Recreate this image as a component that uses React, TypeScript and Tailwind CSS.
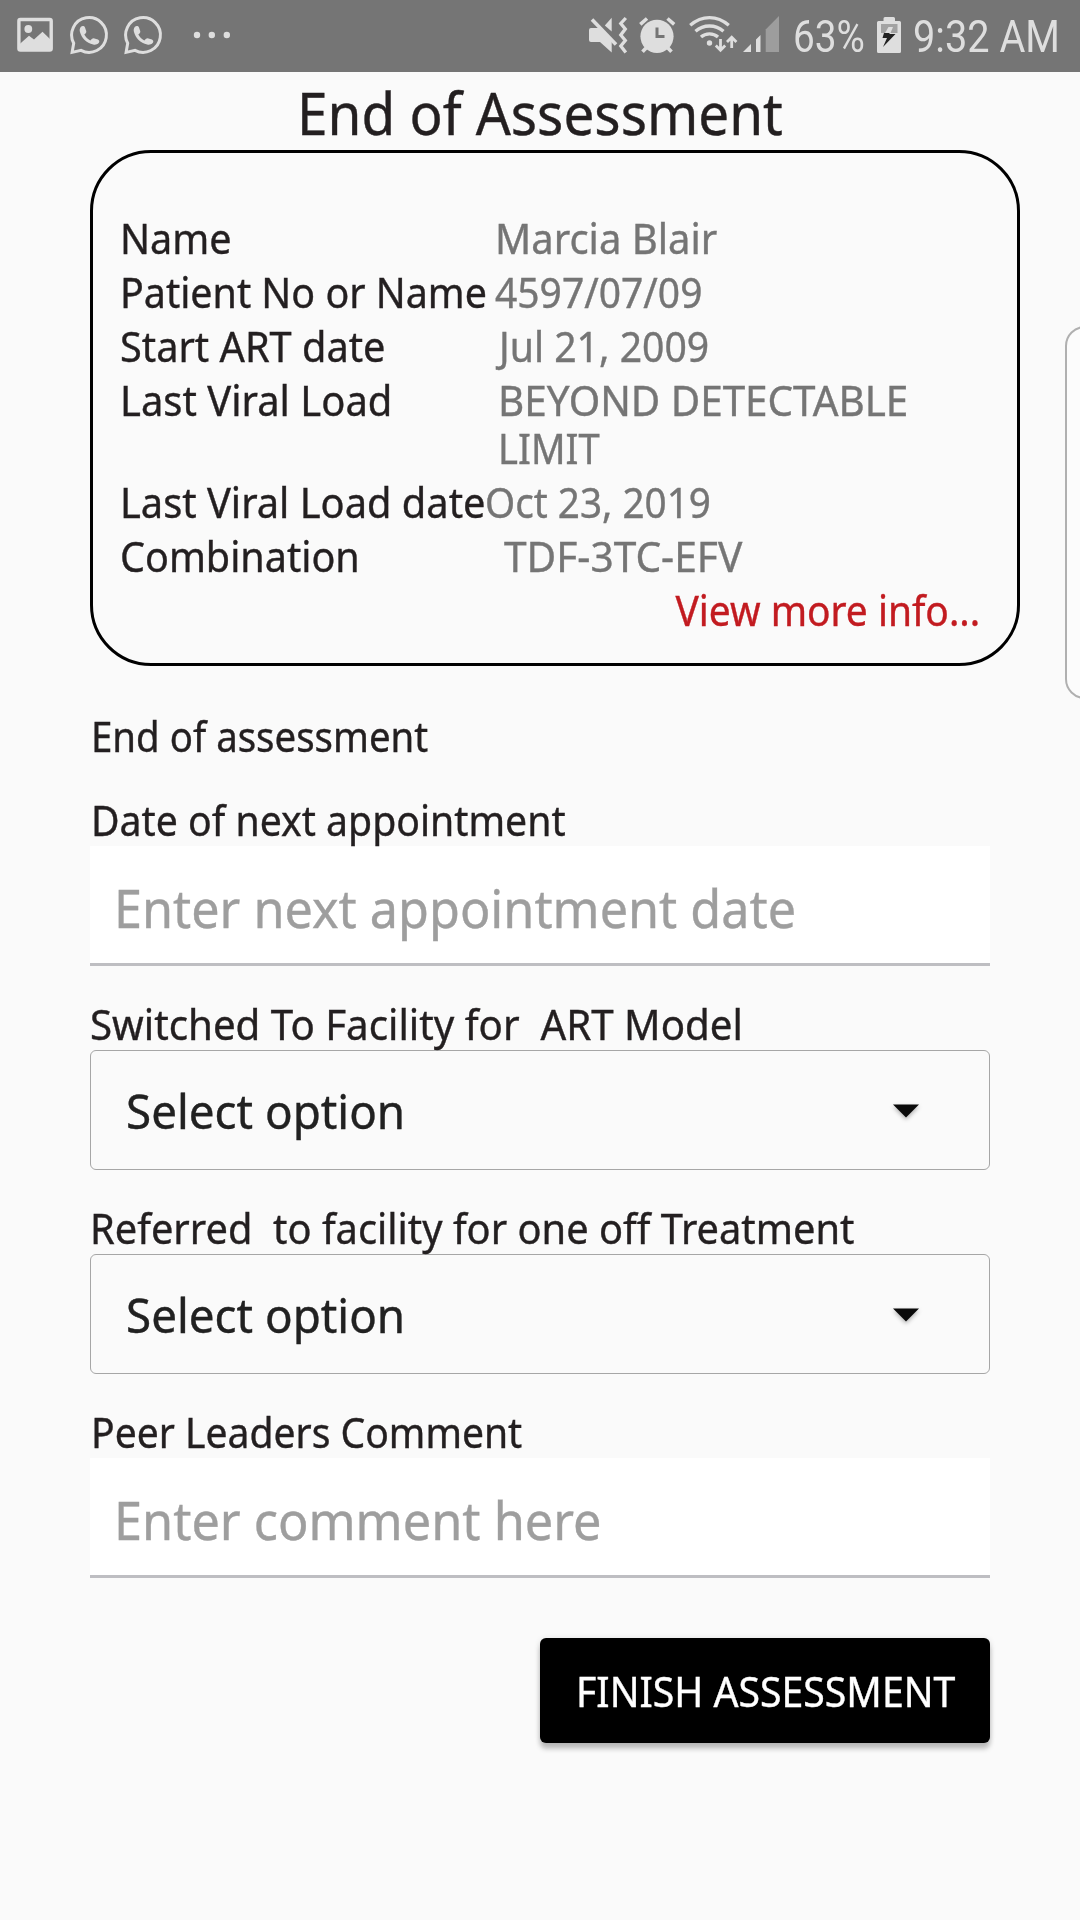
import React from "react";

const fit = "inline-block origin-left whitespace-pre";

const patient = [
  { label: "Name", ls: "scale-x-[0.966]", value: "Marcia Blair", vs: "scale-x-[0.975]" },
  { label: "Patient No or Name", ls: "scale-x-[0.961]", value: "4597/07/09", vs: "scale-x-[0.951]" },
  { label: "Start ART date", ls: "scale-x-[0.969]", value: "Jul 21, 2009", vs: "ml-[4px] scale-x-[0.955]" },
  { label: "Last Viral Load", ls: "scale-x-[0.974]", value: "BEYOND DETECTABLE", more: "LIMIT", vs: "ml-[3px] scale-x-[0.984]" },
  { label: "Last Viral Load date", ls: "scale-x-[0.971]", value: "Oct 23, 2019", vs: "ml-[-10px] scale-x-[0.943]" },
  { label: "Combination", ls: "scale-x-[0.964]", value: "TDF-3TC-EFV", vs: "ml-[9px] scale-x-[0.991]" },
];

function WhatsApp() {
  return (
    <svg width="54" height="72" viewBox="61.6 0 54 72">
      <path
        d="M73.3 43.2A17.4 17.4 0 1 1 80.6 50.4L71.7 52.4Z"
        fill="none"
        stroke="#dedede"
        strokeWidth="3"
        strokeLinejoin="miter"
      />
      <path
        d="M80.6 26.8c1.2-1.2 3.3-.9 4 .7l1.2 3.5c.3 1-.1 2-.9 2.7l-1 .9c1.4 2.600 3.400 4.600 6 6l1.500-1.500c.7-.7 1.600-1 2.600-.7l3.500 1.200c1.500.6 1.900 2.400.8 3.500-1.300 1.400-3.400 2-5.500 1.500-6.800-1.700-11.600-6.400-13.300-12.800-.5-1.900-.1-3.700 1.100-5z"
        fill="#dedede"
      />
    </svg>
  );
}

function StatusBar() {
  return (
    <header className="flex h-[72px] justify-between overflow-hidden bg-[#757575] text-[45px] leading-[73px] font-['Roboto',sans-serif] text-[#dedede]">
      <div className="flex">
        <svg width="62" height="72" viewBox="0 0 62 72">
          <rect x="18.900" y="19.500" width="32.300" height="30.500" rx="1.500" fill="none" stroke="#dedede" strokeWidth="3.400" />
          <circle cx="28.300" cy="29" r="3.900" fill="#dedede" />
          <path d="M20 43.800 29 35.800 34 39.500 42.500 31.800 50 39V50H20Z" fill="#dedede" />
        </svg>
        <WhatsApp />
        <WhatsApp />
        <svg width="70" height="72" viewBox="170 0 70 72" fill="#dedede">
          <circle cx="197" cy="35" r="3.200" />
          <circle cx="211.800" cy="35" r="3.200" />
          <circle cx="226.800" cy="35" r="3.200" />
        </svg>
      </div>
      <div className="flex">
        <svg width="50" height="72" viewBox="12 0 50 72" fill="#dedede">
          <path d="M21 28H29L41.700 39V52.500L30 42H21Q19 42 19 40V30Q19 28 21 28Z" />
          <path d="M34.800 25.500 41.700 17.800V31.500Z" />
          <path d="M22 19.500 46 44.500" stroke="#dedede" strokeWidth="3.600" />
          <path d="M55.800 18 50.800 23.500 55.300 29 50.800 35 55.300 40.500 50.800 46 55.800 52.500" fill="none" stroke="#dedede" strokeWidth="3.300" />
        </svg>
        <svg width="50" height="72" viewBox="62 0 50 72">
          <circle cx="87" cy="36.300" r="16.600" fill="#dedede" />
          <path d="M70.300 24.300 77 18.500M97.500 18.500 104.200 24.300M72.500 51.800 78 46M96 46 101.500 51.800" stroke="#dedede" strokeWidth="3.600" />
          <path d="M87 27.500V36.500H94.500" fill="none" stroke="#757575" strokeWidth="3" />
        </svg>
        <svg width="58" height="72" viewBox="112 0 58 72" fill="none" stroke="#dedede" strokeWidth="3.300">
          <path d="M120.200 25.300Q129 17.600 139.500 17.600T158.800 25.300" />
          <path d="M125.500 31.300Q131.500 26 139.500 26T153.500 31.300" />
          <path d="M131 37Q134.500 33.800 139.500 33.800T148 37" />
          <circle cx="139.500" cy="43" r="2.700" fill="#dedede" stroke="none" />
          <path d="M150.500 39V50M145.800 45.500 150.500 50.200 155.200 45.500M161.700 48V38M157 42 161.700 37.300 166.400 42" strokeWidth="2.800" />
        </svg>
        <svg width="54" height="72" viewBox="170 0 54 72" fill="#dedede">
          <path d="M173 52 181 44V52ZM186 39.500 190.500 35V52H186Z" />
          <path d="M195.700 29.500 209 16V52H195.700Z" fill="#9d9d9d" />
        </svg>
        <div className="w-[77px]">
          <span className={`${fit} ml-[-1px] scale-x-[0.86]`}>63%</span>
        </div>
        <svg width="42" height="72" viewBox="871 0 42 72">
          <path d="M883.500 21V18.500Q883.500 17 885 17H893.500Q895 17 895 18.500V21H899.500Q901 21 901 22.500V51.500Q901 53 899.500 53H878.500Q877 53 877 51.500V22.500Q877 21 878.500 21Z" fill="#dedede" />
          <path d="M881 24H897.500V33H881Z" fill="#a2a2a2" />
          <path d="M888.500 27H893L890.500 33H885Z" fill="#dedede" />
          <path d="M884 33H889.500V34H895.500L883 47 887 38H882.500Z" fill="#222" />
        </svg>
        <div className="w-[167px]">
          <span className={`${fit} scale-x-[0.882]`}>9:32 AM</span>
        </div>
      </div>
    </header>
  );
}

function TextField({ label, ls, hint, hs }: { label: string; ls: string; hint: string; hs: string }) {
  return (
    <div className="mb-[34px]">
      <div className="h-[50px] pl-px">
        <label className={`${fit} ${ls}`}>{label}</label>
      </div>
      <div className="h-[120px] border-b-[3px] border-[#bebec2] bg-white pl-[24px] text-[52.8px] leading-[123px] text-[#9e9e9e]">
        <span className={`${fit} ${hs}`}>{hint}</span>
      </div>
    </div>
  );
}

function SelectField({ label, ls }: { label: string; ls: string }) {
  return (
    <div className="mb-[34px]">
      <div className="h-[50px]">
        <label className={`${fit} ${ls}`}>{label}</label>
      </div>
      <div className="flex h-[120px] items-center justify-between rounded-[6px] border border-[#a6a6a6] pt-[2px] pr-[70px] pl-[35px] text-[47px] leading-[118px] text-[#212121]">
        <span className={`${fit} scale-x-[0.974]`}>Select option</span>
        <svg className="drop-shadow-[0_2px_2px_rgba(0,0,0,0.3)]" width="26" height="14" viewBox="0 0 26 14">
          <path d="M0 .5H26L13 13.500Z" fill="#0a0a0a" />
        </svg>
      </div>
    </div>
  );
}

export default function App() {
  return (
    <div className="relative h-[1920px] w-[1080px] overflow-hidden bg-[#fafafa] font-['Noto_Sans',sans-serif] text-[41px] leading-[48px] text-[#231f20]">
      <StatusBar />
      <main className="pr-[90px] pl-[90px] [-webkit-text-stroke:0.4px]">
        <h1 className="h-[78px] pl-[207px] text-[58.5px] leading-[80px]">
          <span className={`${fit} scale-x-[0.938]`}>End of Assessment</span>
        </h1>
        <section className="mr-[-30px] h-[516px] rounded-[61px] border-[3px] border-black pt-[61px] pr-[37px] pl-[27px]">
          {patient.map((row) => (
            <div key={row.label} className="flex pb-[6px]">
              <div className="w-[375px] shrink-0">
                <span className={`${fit} ${row.ls}`}>{row.label}</span>
              </div>
              <div className="flex flex-col items-start text-[#757575]">
                <span className={`${fit} ${row.vs}`}>{row.value}</span>
                {row.more && <span className={`${fit} ml-[3px] scale-x-[0.93]`}>{row.more}</span>}
              </div>
            </div>
          ))}
          <div className="flex justify-end">
            <a className="inline-block origin-right scale-x-[0.949] whitespace-pre text-[#c21b20]">View more info...</a>
          </div>
        </section>
        <h2 className="mt-[46px] mb-[36px] pl-px">
          <span className={`${fit} scale-x-[0.937]`}>End of assessment</span>
        </h2>
        <form>
          <TextField label="Date of next appointment" ls="scale-x-[0.956]" hint="Enter next appointment date" hs="scale-x-[0.953]" />
          <SelectField label="Switched To Facility for  ART Model" ls="scale-x-[0.982]" />
          <SelectField label="Referred  to facility for one off Treatment" ls="scale-x-[0.971]" />
          <TextField label="Peer Leaders Comment" ls="scale-x-[0.953]" hint="Enter comment here" hs="scale-x-[0.955]" />
          <div className="flex justify-end pt-[26px]">
            <button type="button" className="h-[105px] w-[450px] rounded-[6px] bg-black pl-[36px] text-left text-white shadow-[0_6px_5px_rgba(0,0,0,0.22),0_1px_6px_rgba(0,0,0,0.12)]">
              <span className={`${fit} scale-x-[0.956]`}>FINISH ASSESSMENT</span>
            </button>
          </div>
        </form>
      </main>
      <aside className="absolute top-[326px] left-[1065px] h-[373px] w-[60px] rounded-[20px] border-2 border-[#b0b0b0] bg-[#fcfcfc]" />
    </div>
  );
}
